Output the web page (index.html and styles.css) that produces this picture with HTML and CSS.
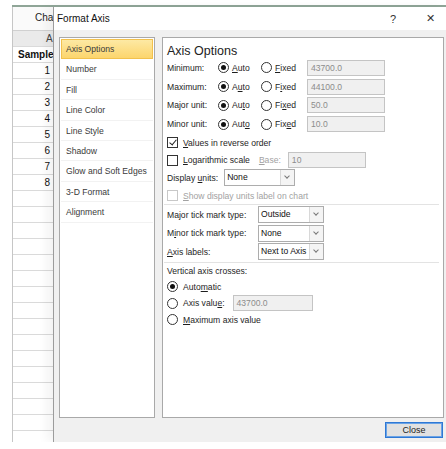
FILE: index.html
```html
<!DOCTYPE html>
<html lang="en">
<head>
  <meta charset="UTF-8">
  <meta name="viewport" content="width=device-width, initial-scale=1.0">
  <title>Format Axis</title>
  <link rel="stylesheet" href="styles.css">
</head>
<body>

<div id="frame">

  <div id="sheet">
    <div class="sheet-top">Cha</div>
    <div class="cell col-head">A</div>
    <div class="cell bold">Sample</div>
    <div class="cell num">1</div>
    <div class="cell num">2</div>
    <div class="cell num">3</div>
    <div class="cell num">4</div>
    <div class="cell num">5</div>
    <div class="cell num">6</div>
    <div class="cell num">7</div>
    <div class="cell num">8</div>
    <div class="cell"></div>
    <div class="cell"></div>
    <div class="cell"></div>
    <div class="cell"></div>
    <div class="cell"></div>
    <div class="cell"></div>
    <div class="cell"></div>
    <div class="cell"></div>
    <div class="cell"></div>
    <div class="cell"></div>
    <div class="cell"></div>
    <div class="cell"></div>
    <div class="cell"></div>
    <div class="cell"></div>
    <div class="cell"></div>
    <div class="cell"></div>
    <div class="cell"></div>
    <div class="cell"></div>
    <div class="cell"></div>
    <div class="cell"></div>
    <div class="cell"></div>
    <div class="cell sel"></div>
  </div>

  <div id="dialog">
    <div class="titlebar">
      <span class="title">Format Axis</span>
      <span class="tb-btn help">?</span>
      <span class="tb-btn close-x">&#x2715;</span>
    </div>

    <div class="dlg-body">
      <ul class="nav">
        <li class="active">Axis Options</li>
        <li>Number</li>
        <li>Fill</li>
        <li>Line Color</li>
        <li>Line Style</li>
        <li>Shadow</li>
        <li>Glow and Soft Edges</li>
        <li>3-D Format</li>
        <li>Alignment</li>
      </ul>

      <div class="panel">
        <h2>Axis Options</h2>

        <div class="unit-grid">
          <span>Minimum:</span>
          <span class="radio on"></span><span><u>A</u>uto</span>
          <span class="radio"></span><span><u>F</u>ixed</span>
          <span class="field">43700.0</span>

          <span>Maximum:</span>
          <span class="radio on"></span><span>A<u>u</u>to</span>
          <span class="radio"></span><span>F<u>i</u>xed</span>
          <span class="field">44100.0</span>

          <span>Major unit:</span>
          <span class="radio on"></span><span>Au<u>t</u>o</span>
          <span class="radio"></span><span>Fi<u>x</u>ed</span>
          <span class="field">50.0</span>

          <span>Minor unit:</span>
          <span class="radio on"></span><span>Aut<u>o</u></span>
          <span class="radio"></span><span>Fix<u>e</u>d</span>
          <span class="field">10.0</span>
        </div>

        <div class="row chk-row">
          <span class="check on"></span><span><u>V</u>alues in reverse order</span>
        </div>
        <div class="row chk-row">
          <span class="check"></span><span><u>L</u>ogarithmic scale</span>
          <span class="muted base-lbl"><u>B</u>ase:</span>
          <span class="field base">10</span>
        </div>
        <div class="row">
          <span>Display <u>u</u>nits:</span>
          <span class="select units">None<i class="arrow"></i></span>
        </div>
        <div class="row chk-row muted">
          <span class="check off"></span><span><u>S</u>how display units label on chart</span>
        </div>

        <hr>

        <div class="tick-grid">
          <span>Major tick mark type:</span>
          <span class="select">Outside<i class="arrow"></i></span>
          <span>M<u>i</u>nor tick mark type:</span>
          <span class="select">None<i class="arrow"></i></span>
          <span><u>A</u>xis labels:</span>
          <span class="select">Next to Axis<i class="arrow"></i></span>
        </div>

        <hr class="sep2">

        <div class="row crosses">Vertical axis crosses:</div>
        <div class="row cross-row">
          <span class="radio on"></span><span>Auto<u>m</u>atic</span>
        </div>
        <div class="row cross-row">
          <span class="radio"></span><span>Axis valu<u>e</u>:</span>
          <span class="field axval">43700.0</span>
        </div>
        <div class="row cross-row">
          <span class="radio"></span><span><u>M</u>aximum axis value</span>
        </div>
      </div>
    </div>

    <div class="footer">
      <button class="btn-close">Close</button>
    </div>
  </div>

</div>

</body>
</html>
```

FILE: styles.css
```css
body {
  margin: 0;
  background: #fff;
  font-family: "Liberation Sans", Arial, sans-serif;
  font-size: 8.6px;
  color: #1e1e1e;
  overflow: hidden;
}

#frame {
  display: flex;
  margin: 5px 0 0 12px;
  height: 435px;
  border-top: 2px solid #8fa597;
}

/* planilha atras do dialogo */
#sheet {
  width: 40px;
  overflow: hidden;
  border-left: 1px solid #c6c6c6;
  background: #fff;
}
.sheet-top {
  height: 23px;
  line-height: 22px;
  padding-left: 22px;
  font-size: 10px;
  white-space: nowrap;
  background: #fafafa;
}
.cell {
  height: 15px;
  line-height: 15px;
  border-bottom: 1px solid #dadada;
  white-space: nowrap;
  font-size: 10px;
  color: #111;
}
.col-head {
  background: #eaeaea;
  border-top: 1px solid #d0d0d0;
  padding-left: 33px;
  color: #444;
}
.bold {
  font-weight: bold;
  padding-left: 5px;
}
.num {
  text-align: right;
  padding-right: 3px;
}
.sel {
  border-left: 2px solid #111;
  margin-left: -1px;
}

#dialog {
  flex: 1;
  display: flex;
  flex-direction: column;
  background: #f0f0f0;
  border-left: 1px solid #9c9c9c;
  box-shadow: -6px 0 10px rgba(0,0,0,0.05);
}
.titlebar {
  display: flex;
  align-items: center;
  height: 23px;
  background: #fff;
  padding-left: 3px;
}
.title {
  flex: 1;
  font-size: 10px;
  color: #111;
}
.tb-btn {
  text-align: center;
  font-size: 11px;
  color: #333;
}
.help {
  width: 42px;
}
.close-x {
  width: 32px;
}

.dlg-body {
  display: flex;
  gap: 7px;
  padding: 7px 2px 0 5px;
  height: 381px;
}

.nav {
  list-style: none;
  margin: 0;
  padding: 1px;
  width: 92px;
  background: #fff;
  border: 1px solid #a9a9a9;
}
.nav li {
  height: 20.4px;
  line-height: 20px;
  padding-left: 5px;
  border-bottom: 1px solid #f2f2f2;
  box-sizing: border-box;
  color: #3a3a3a;
  white-space: nowrap;
}
.nav li.active {
  background: linear-gradient(#fde9a4, #fcd56d);
  border: 1px solid #f2c14d;
  padding-left: 4px;
  line-height: 18px;
}

.panel {
  flex: 1;
  background: #fff;
  border: 1px solid #a9a9a9;
  padding: 0 4px;
}
.panel h2 {
  margin: 5.5px 0 0 0;
  font-size: 12.5px;
  font-weight: normal;
  color: #222;
  height: 15px;
  line-height: 15px;
}

.unit-grid {
  display: grid;
  grid-template-columns: 48px 11px 26px 11px 29px 78px;
  grid-auto-rows: 18.8px;
  column-gap: 3px;
  align-items: center;
}

.radio {
  width: 9px;
  height: 9px;
  border: 1px solid #333;
  border-radius: 50%;
  box-sizing: content-box;
  position: relative;
  display: inline-block;
  flex: none;
}
.radio.on::after {
  content: "";
  position: absolute;
  left: 2px;
  top: 2px;
  width: 5px;
  height: 5px;
  border-radius: 50%;
  background: #111;
}

.field {
  height: 14px;
  line-height: 14px;
  border: 1px solid #c4c4c4;
  background: #f0f0f0;
  color: #8c8c8c;
  padding-left: 3px;
  box-sizing: content-box;
}

.row {
  display: flex;
  align-items: center;
  height: 17.7px;
}
.chk-row {
  gap: 5px;
}
.check {
  width: 9px;
  height: 9px;
  border: 1px solid #333;
  position: relative;
  display: inline-block;
  flex: none;
}
.check.on::after {
  content: "";
  position: absolute;
  left: 3px;
  top: 0px;
  width: 3px;
  height: 6px;
  border: solid #222;
  border-width: 0 1px 1px 0;
  transform: rotate(40deg);
}
.check.off {
  border-color: #c8c8c8;
}
.muted {
  color: #a2a2a2;
}
.base-lbl {
  margin-left: 4px;
}
.field.base {
  width: 73px;
  margin-left: 2px;
}

.select {
  position: relative;
  display: inline-block;
  height: 15px;
  line-height: 15px;
  border: 1px solid #adadad;
  padding-left: 2px;
  color: #111;
  background: #fff;
  white-space: nowrap;
}
.select .arrow {
  position: absolute;
  right: 0;
  top: 0;
  width: 13px;
  height: 15px;
  border-left: 1px solid #d8d8d8;
  background: #f4f4f4;
}
.select .arrow::after {
  content: "";
  position: absolute;
  left: 4px;
  top: 4px;
  width: 3px;
  height: 3px;
  border: solid #777;
  border-width: 0 1px 1px 0;
  transform: rotate(45deg);
}
.units {
  width: 67px;
  margin-left: 6px;
}

.panel hr {
  border: 0;
  border-top: 1px solid #e3e3e3;
  margin: 0 0 0 -3px;
}
.panel hr.sep2 {
  margin-top: 1.5px;
}

.tick-grid {
  display: grid;
  grid-template-columns: 91px 66px;
  grid-auto-rows: 18.5px;
  align-items: center;
}

.crosses {
  height: 14px;
  margin-top: 1px;
}
.cross-row {
  height: 16.5px;
  gap: 5px;
}
.field.axval {
  width: 75px;
  margin-left: 3px;
}

.footer {
  display: flex;
  justify-content: flex-end;
  padding: 4px 3px 0 0;
}
.btn-close {
  width: 58px;
  height: 16px;
  padding: 0;
  font-family: "Liberation Sans", Arial, sans-serif;
  font-size: 9px;
  color: #222;
  background: #e1e1e1;
  border: 1px solid #2f78d4;
  box-shadow: inset 0 0 0 1px #6aa3e6;
}
```
